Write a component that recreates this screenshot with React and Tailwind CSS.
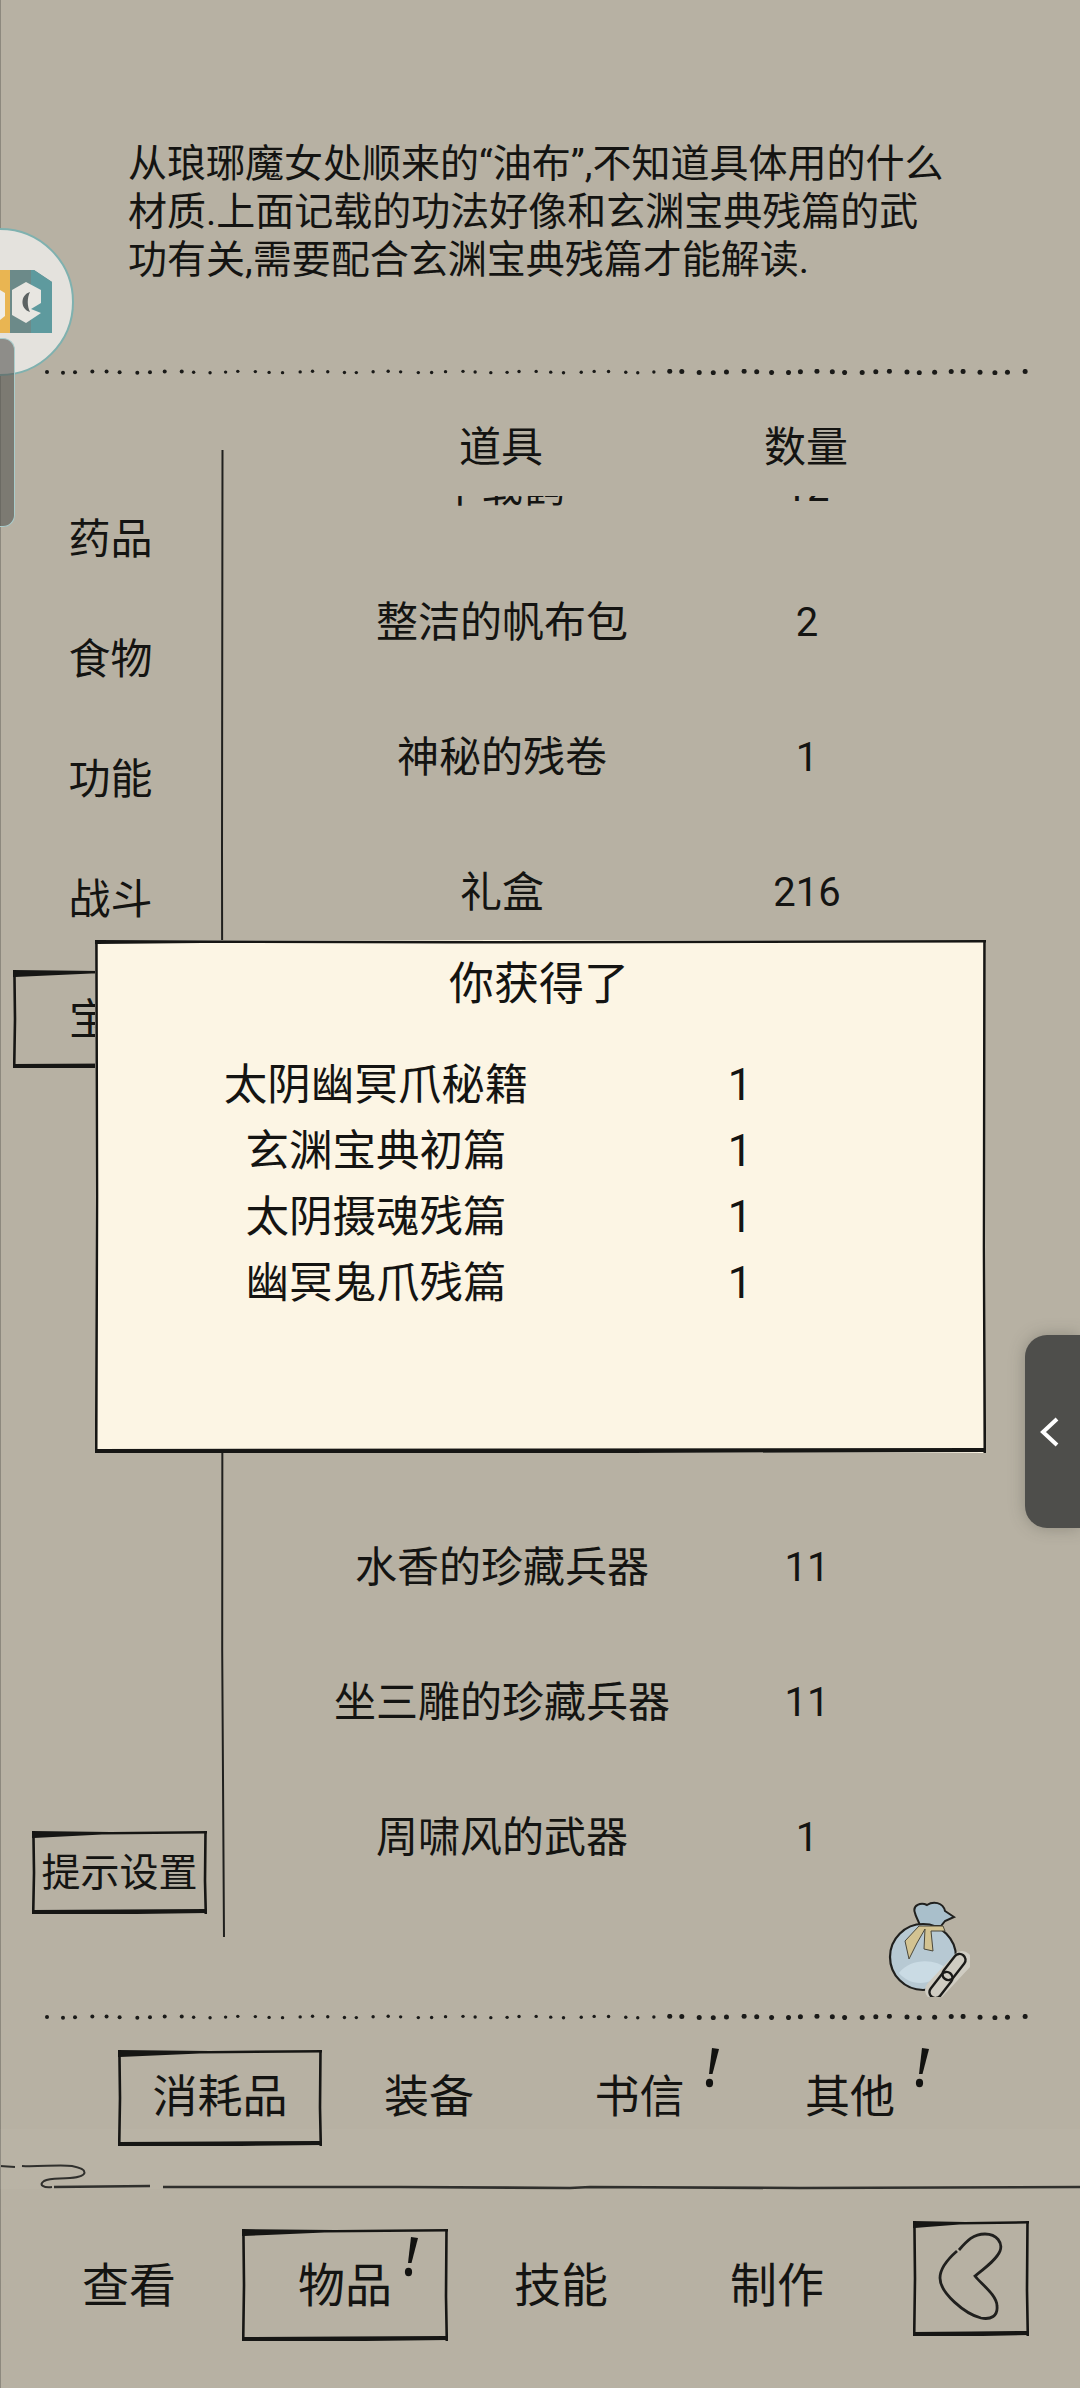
import React from "react";

const INK = "#161614";

function Frame({ w, h, heavy = true }) {
  const t = heavy ? 7 : 4;
  return (
    <svg className="absolute left-0 top-0 pointer-events-none" width={w} height={h} viewBox={`0 0 ${w} ${h}`}>
      <path d={`M0 0 L${w * 0.45} 1 L${w} 0 L${w} 2.5 L${w * 0.4} 3.5 L${w * 0.12} ${t - 1} L2 ${t} L0 ${t} Z`} fill={INK} />
      <path d={`M1.4 0 L2 ${h * 0.5} L1.2 ${h}`} stroke={INK} strokeWidth="2.6" fill="none" />
      <path d={`M${w - 1.5} 0 L${w - 2} ${h * 0.6} L${w - 1.2} ${h}`} stroke={INK} strokeWidth="2.6" fill="none" />
      <path d={`M0 ${h - 4} L${w * 0.5} ${h - 4.5} L${w - 2} ${h - 5} L${w} ${h - 1} L${w * 0.6} ${h} L0 ${h} Z`} fill={INK} />
    </svg>
  );
}

function Dots() {
  const dots = [];
  let x = 2;
  let i = 0;
  while (x < 990) {
    const wob = Math.sin(i * 2.3) * 1.6;
    dots.push(
      <circle key={i} cx={x + wob} cy={3 + Math.sin(i * 1.3) * 0.7} r={x > 620 ? 2.5 : x < 150 ? 2 : 1.7} fill="#1a1a18" />
    );
    x += 14.8;
    i += 1;
  }
  return (
    <svg className="ml-[45px] shrink-0 block" width="992" height="6" viewBox="0 0 992 6">
      {dots}
    </svg>
  );
}

function Bang({ className }) {
  return (
    <svg className={`absolute ${className}`} width="16" height="42" viewBox="0 0 16 42">
      <path d="M8 1 L15 2 L8.5 27 L5 27 Z" fill="#121210" />
      <ellipse cx="5.5" cy="36" rx="3.6" ry="4.2" fill="#121210" />
    </svg>
  );
}

const rows = [
  ["千载鹤", "12"],
  ["整洁的帆布包", "2"],
  ["神秘的残卷", "1"],
  ["礼盒", "216"],
  ["", ""],
  ["", ""],
  ["", ""],
  ["", ""],
  ["水香的珍藏兵器", "11"],
  ["坐三雕的珍藏兵器", "11"],
  ["周啸风的武器", "1"],
];

const gains = [
  ["太阴幽冥爪秘籍", "1"],
  ["玄渊宝典初篇", "1"],
  ["太阴摄魂残篇", "1"],
  ["幽冥鬼爪残篇", "1"],
];

function Bag() {
  return (
    <svg className="block" width="84" height="96" viewBox="27 40 84 96">
      <path d="M56 52 C53 44 62 41 68 44 C74 40 84 41 86 50 L95 56 L86 60 L82 65 L61 65 C60 60 57 57 56 52 Z" fill="#a9bfcb" stroke="#20201e" strokeWidth="2" />
      <circle cx="64" cy="96" r="33" fill="#b7c9d3" stroke="#20201e" strokeWidth="2.2" />
      <path d="M40 112 C50 124 70 128 88 108 C78 98 52 96 40 112 Z" fill="#cadbe4" />
      <path d="M60 65 L46 80 L50 98 L58 82 L66 68 L65 88 L74 90 L72 70 L86 70 L84 65 Z" fill="#d3c392" stroke="#4a473a" strokeWidth="1" />
      <path d="M76 129 L103 100" stroke="#cfccc2" strokeWidth="20" strokeLinecap="round" />
      <rect x="80" y="100" width="30" height="12" rx="6" transform="rotate(-52 95 106)" fill="none" stroke="#1a1a18" strokeWidth="2.4" />
      <rect x="67" y="118" width="30" height="12" rx="6" transform="rotate(-52 82 124)" fill="none" stroke="#1a1a18" strokeWidth="2.4" />
    </svg>
  );
}

export default function App() {
  return (
    <div className="relative w-[1080px] h-[2388px] overflow-hidden flex flex-col bg-[#b7b1a3] text-[#141412] [font-family:Roboto,'Noto_Sans_CJK_SC',sans-serif]">
      <div className="absolute left-0 top-0 w-px h-full bg-[#8d897e]" />
      <div className="absolute left-0 top-[2129px] w-full h-[60px] bg-white/[0.03]" />

      {/* description */}
      <div className="h-[369px] shrink-0 pl-[128px] pt-[140px] text-[39px] leading-[48px] whitespace-nowrap">
        <div>从琅琊魔女处顺来的“油布”,不知道具体用的什么</div>
        <div>材质.上面记载的功法好像和玄渊宝典残篇的武</div>
        <div>功有关,需要配合玄渊宝典残篇才能解读.</div>
      </div>
      <Dots />

      {/* middle */}
      <div className="flex h-[1639px] shrink-0">
        <div className="w-[221px] shrink-0 flex flex-col pt-[104px] text-[42px]">
          {["药品", "食物", "功能", "战斗"].map((t) => (
            <div key={t} className="h-[120px] flex items-center justify-center">
              {t}
            </div>
          ))}
          <div className="h-[120px] flex items-center pl-[13px]">
            <div className="relative w-[196px] h-[98px] flex items-center justify-center">
              <Frame w={196} h={98} />
              宝物
            </div>
          </div>
          <div className="mt-auto mb-[100px] ml-[32px] relative w-[175px] h-[83px] flex items-center justify-center text-[39px] pt-[2px]">
            <Frame w={175} h={83} />
            提示设置
          </div>
        </div>

        <svg className="shrink-0 mt-[75px] block" width="4" height="1487" viewBox="0 0 4 1487">
          <path d="M1.5 0 L1 400 L1.5 800 L1.2 1200 L3 1487" stroke="#20201e" strokeWidth="2" fill="none" />
        </svg>

        <div className="flex flex-col w-[855px]">
          <div className="grid grid-cols-[490px_120px] pl-[31px] mt-[41px] h-[50px] items-center text-[42px] text-center whitespace-nowrap">
            <div>道具</div>
            <div>数量</div>
          </div>
          <div className="mt-[30px] overflow-hidden">
            <div className="-mt-[76px]">
              {rows.map(([n, c], i) => (
                <div key={i} className="grid grid-cols-[490px_120px] pl-[32px] h-[135px] items-center text-center whitespace-nowrap text-[42px]">
                  <div>{n}</div>
                  <div className="text-[40px]">{c}</div>
                </div>
              ))}
            </div>
          </div>
          <div className="ml-[661px] -mt-[4px]">
            <Bag />
          </div>
        </div>
      </div>
      <Dots />

      {/* tabs */}
      <div className="flex pl-[118px] pt-[30px] shrink-0 text-[45px]">
        <div className="relative w-[204px] h-[96px] flex items-center justify-center">
          <Frame w={204} h={96} />
          消耗品
        </div>
        <div className="w-[212px] h-[96px] flex items-center justify-center pl-[2px]">装备</div>
        <div className="relative w-[211px] h-[96px] flex items-center justify-center">
          书信
          <Bang className="left-[170px] -top-[3px]" />
        </div>
        <div className="relative w-[210px] h-[96px] flex items-center justify-center">
          其他
          <Bang className="left-[169px] -top-[3px]" />
        </div>
      </div>

      {/* divider */}
      <svg className="block mt-[15px] shrink-0" width="1080" height="30" viewBox="0 0 1080 30">
        <path d="M0 5 L15 6 M22 5 C40 6 60 3 72 5 C88 8 90 15 70 17 C58 18 50 17 44 20 C38 24 44 27 52 26" stroke="#2a2a27" strokeWidth="2" fill="none" />
        <path d="M54 26 L150 25 M163 26 L400 26 L570 27 L590 26 L800 27 L1080 26" stroke="#2a2a27" strokeWidth="2.6" fill="none" />
      </svg>

      {/* nav */}
      <div className="flex pt-[30px] shrink-0 text-[47px]">
        <div className="w-[242px] h-[130px] pl-[16px] flex items-center justify-center">查看</div>
        <div className="relative w-[206px] h-[112px] mt-[8px] flex items-center justify-center pt-[2px]">
          <Frame w={206} h={112} />
          物品
          <Bang className="left-[161px] top-[7px]" />
        </div>
        <div className="w-[226px] h-[130px] flex items-center justify-center">技能</div>
        <div className="w-[206px] h-[130px] flex items-center justify-center">制作</div>
        <div className="relative ml-[33px] w-[116px] h-[115px]">
          <Frame w={116} h={115} />
          <svg className="absolute left-0 top-0" width="116" height="115" viewBox="0 0 116 115">
            <path d="M46 29 C54 20 60 13 72 13 C84 13 90 22 87 30 C84 38 72 47 62 55 C68 63 84 74 84 85 C85 95 78 99 68 97 C52 93 27 72 27 57 C27 46 36 37 44 30" stroke="#20201e" strokeWidth="2.8" fill="none" />
          </svg>
        </div>
      </div>

      {/* modal */}
      <div className="absolute left-[95px] top-[940px] w-[891px] h-[513px] bg-[#fcf5e4] pt-[15px]">
        <Frame w={891} h={513} heavy={false} />
        <div className="h-[60px] flex items-center justify-center text-[45px] pr-[3px]">你获得了</div>
        <div className="mt-[38px]">
          {gains.map(([n, c]) => (
            <div key={n} className="grid grid-cols-[562px_166px] h-[66px] items-center text-center whitespace-nowrap text-[43.5px]">
              <div>{n}</div>
              <div>{c}</div>
            </div>
          ))}
        </div>
      </div>

      {/* floating ball on the left */}
      <div className="absolute -left-[74px] top-[228px] w-[148px] h-[148px] rounded-full bg-[#e4e2dd] border-2 border-[#7fb1af]" />
      <svg className="absolute left-0 top-[268px]" width="56" height="68" viewBox="0 0 56 68">
        <rect x="0" y="2" width="10" height="63" fill="#e9b552" />
        <path d="M0 22 L5 25 L5 48 L0 52 Z" fill="#efede8" />
        <path d="M10 2 L34 2 L52 14 L52 65 L10 65 Z" fill="#6c8a89" />
        <path d="M31 2 L34 2 L52 14 L52 65 L31 65 Z" fill="#5e9a9e" />
        <path d="M26 14 L41 22 L41 35 L31 41 L41 45 L26 55 L12 47 L12 22 Z" fill="#e8e6e1" />
        <path d="M30 24 C20 27 20 41 30 44 C27 38 27 30 30 24 Z" fill="#5c6262" />
      </svg>
      <div className="absolute left-0 top-[338px] w-[15px] h-[189px] rounded-r-[12px] bg-[#555551]/60 border-r border-y border-[#a9cccb]" />

      {/* floating tab on the right */}
      <div className="absolute right-0 top-[1335px] w-[55px] h-[193px] rounded-l-[22px] bg-[#4e4e4b] shadow-[0_0_16px_rgba(70,70,60,0.35)] flex items-center pl-[15px]">
        <svg width="20" height="30" viewBox="0 0 20 30">
          <path d="M17 2 L3 15 L17 28" stroke="#ffffff" strokeWidth="4" fill="none" />
        </svg>
      </div>
    </div>
  );
}
